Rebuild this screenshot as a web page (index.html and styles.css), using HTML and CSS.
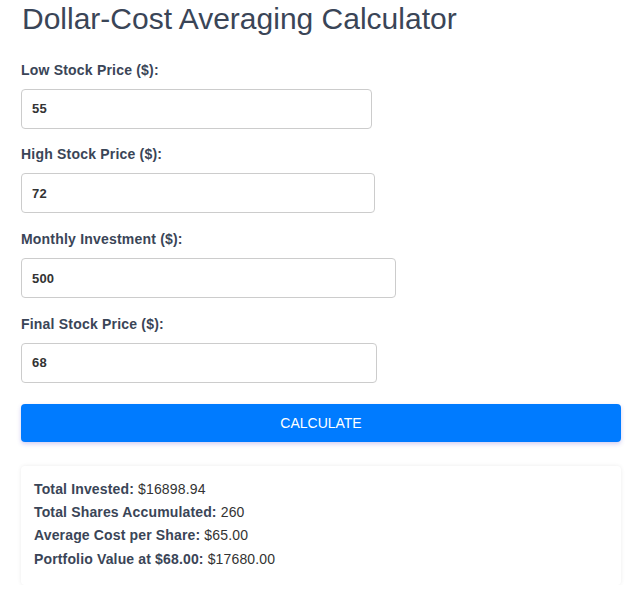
FILE: index.html
```html
<!DOCTYPE html>
<html lang="en">
<head>
  <meta charset="UTF-8" />
  <meta name="viewport" content="width=device-width, initial-scale=1.0"/>
  <title>Dollar-Cost Averaging Calculator</title>
  <link rel="stylesheet" href="styles.css">
</head>
<body>
  <div class="container">
    <h1>Dollar-Cost Averaging Calculator</h1>

    <div class="field">
      <label for="lowPrice">Low Stock Price ($):</label>
      <input type="text" id="lowPrice" class="w-low" value="55">
    </div>

    <div class="field">
      <label for="highPrice">High Stock Price ($):</label>
      <input type="text" id="highPrice" class="w-high" value="72">
    </div>

    <div class="field">
      <label for="monthly">Monthly Investment ($):</label>
      <input type="text" id="monthly" class="w-monthly" value="500">
    </div>

    <div class="field">
      <label for="finalPrice">Final Stock Price ($):</label>
      <input type="text" id="finalPrice" class="w-final" value="68">
    </div>

    <button class="calc-button">CALCULATE</button>

    <div class="results">
      <p><strong>Total Invested:</strong> $16898.94</p>
      <p><strong>Total Shares Accumulated:</strong> 260</p>
      <p><strong>Average Cost per Share:</strong> $65.00</p>
      <p><strong>Portfolio Value at $68.00:</strong> $17680.00</p>
    </div>
  </div>
</body>
</html>
```

FILE: styles.css
```css
body {
  margin: 0;
  font-family: 'Liberation Sans', Arial, sans-serif;
  background: #fff;
  color: #3a4557;
}

.container {
  padding: 0 9px 0 21px;
}

h1 {
  margin: 0;
  padding-top: 1px;
  padding-left: 1px;
  font-size: 30px;
  font-weight: normal;
  line-height: 36px;
  color: #3a4557;
}

.field {
  margin-top: 17.8px;
}

.field:first-of-type {
  margin-top: 24.5px;
}

.field label {
  display: block;
  font-size: 14px;
  font-weight: bold;
  letter-spacing: 0.2px;
  line-height: 16px;
  margin-bottom: 11px;
}

.field input {
  display: block;
  box-sizing: border-box;
  height: 40px;
  padding: 0 10px;
  border: 1px solid #ccc;
  border-radius: 4px;
  font-family: inherit;
  font-size: 13px;
  font-weight: bold;
  letter-spacing: 0.2px;
  color: #333;
  background: #fff;
}

.w-low { width: 351px; }
.w-high { width: 354px; }
.w-monthly { width: 375px; }
.w-final { width: 356px; }

.calc-button {
  display: block;
  width: 100%;
  height: 38px;
  margin-top: 21px;
  background: #007bff;
  color: white;
  border: none;
  border-radius: 4px;
  font-family: inherit;
  font-size: 14px;
  box-shadow: 0 2px 4px rgba(80, 60, 200, 0.25);
  cursor: pointer;
}

.results {
  margin-top: 24px;
  padding: 12px 13px 14px;
  background: #fff;
  border-radius: 4px;
  box-shadow: 0 0 4px rgba(0, 0, 0, 0.08);
  font-size: 14px;
  letter-spacing: 0.15px;
  color: #333;
}

.results p {
  margin: 0;
  line-height: 23.3px;
}

.results strong {
  color: #3a4557;
}
```
